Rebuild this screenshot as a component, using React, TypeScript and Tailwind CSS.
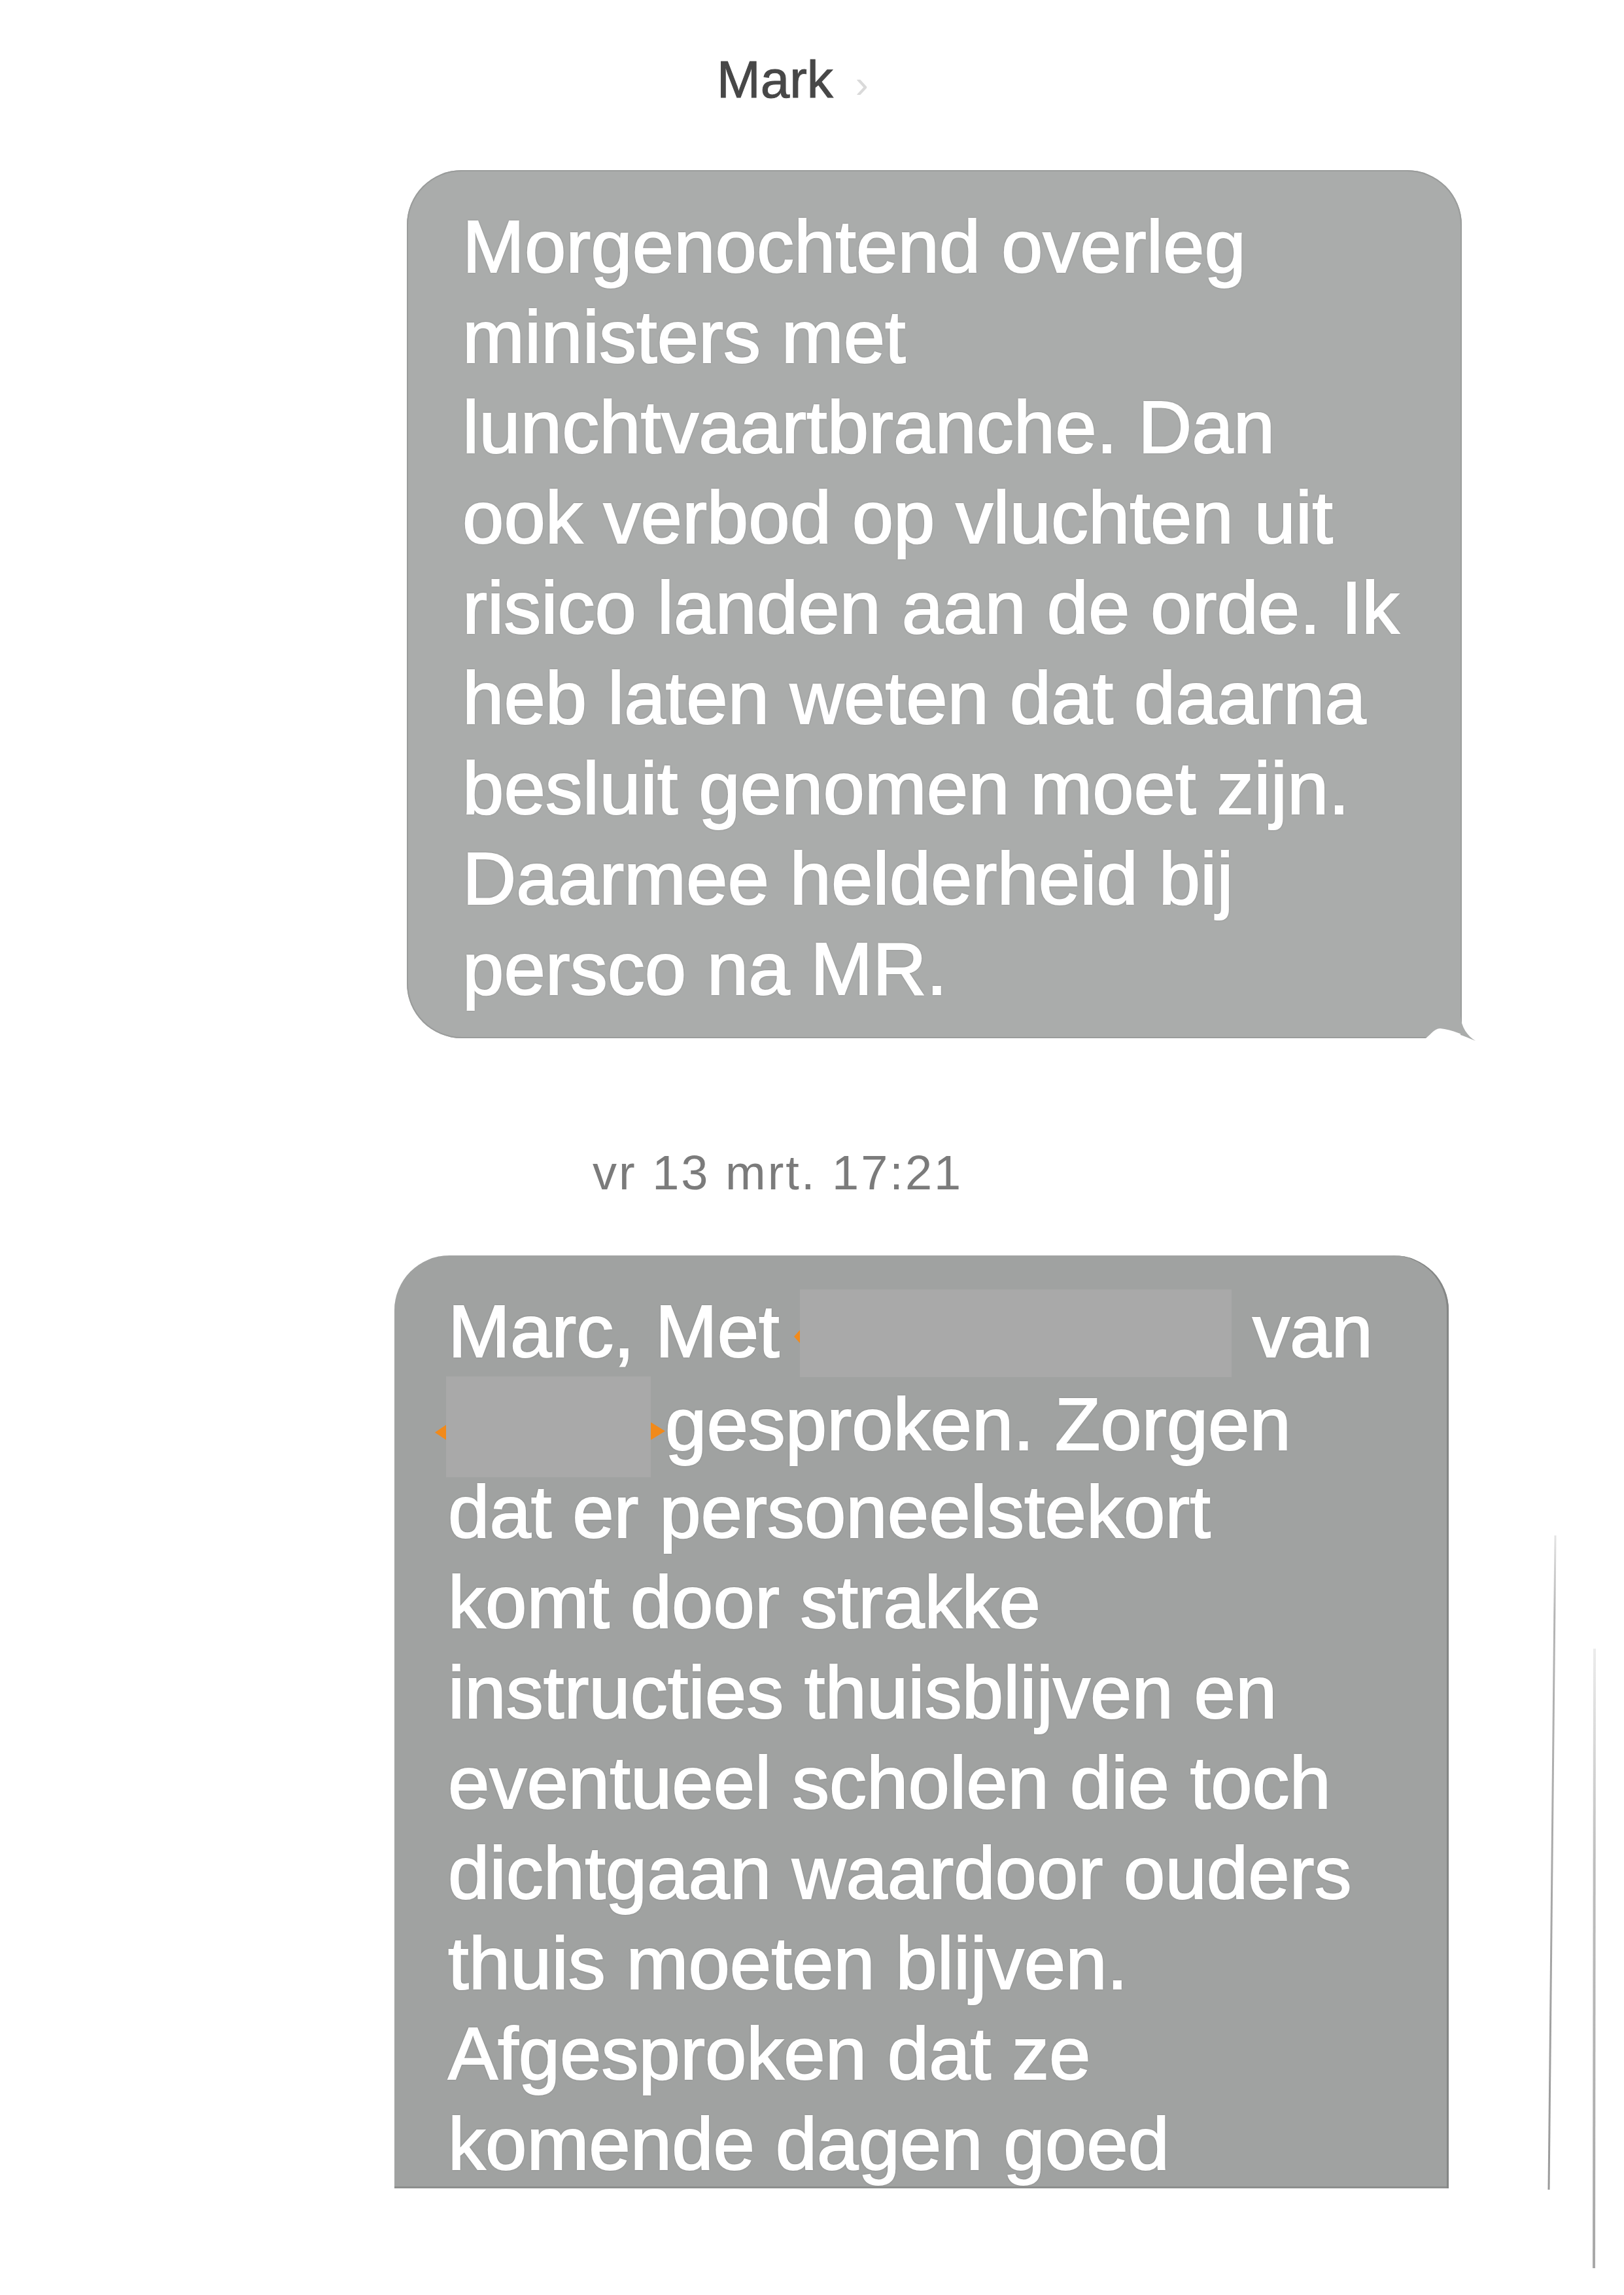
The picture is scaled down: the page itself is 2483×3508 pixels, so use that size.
import React from "react";

const firstMessage = [
  "Morgenochtend overleg",
  "ministers met",
  "lunchtvaartbranche. Dan",
  "ook verbod op vluchten uit",
  "risico landen aan de orde. Ik",
  "heb laten weten dat daarna",
  "besluit genomen moet zijn.",
  "Daarmee helderheid bij",
  "persco na MR.",
];

const secondMessageRest = [
  "dat er personeelstekort",
  "komt door strakke",
  "instructies thuisblijven en",
  "eventueel scholen die toch",
  "dichtgaan waardoor ouders",
  "thuis moeten blijven.",
  "Afgesproken dat ze",
  "komende dagen goed",
];

// scanned text: white glyphs, a bit heavy, with a dark halo round them
const textLine =
  "h-[138px] leading-[138px] whitespace-nowrap [-webkit-text-stroke:2px_white] [text-shadow:0_0_3px_rgba(60,60,60,0.7)]";

const Marker = ({ side, className }: { side: "left" | "right"; className: string }) => (
  <svg className={`absolute ${className}`} viewBox="0 0 20 24" preserveAspectRatio="none">
    {side === "left" ? (
      <polygon points="20,0 0,12 20,24" fill="#f28a1a" />
    ) : (
      <polygon points="0,0 20,12 0,24" fill="#f28a1a" />
    )}
  </svg>
);

const BubbleTail = () => (
  <svg className="absolute right-[-25px] bottom-[-5px] w-[110px] h-[70px]" viewBox="0 0 110 70">
    <path d="M28,66 C36,62 42,50 52,50 C70,52 90,60 106,69 L106,70 L0,70 L0,66 Z" fill="#ffffff" />
    <path d="M83,30 C84,48 94,62 106,69 C96,65 90,62 83,60 Z" fill="#aaacab" />
  </svg>
);

export default function App() {
  return (
    <div className="relative w-[2483px] h-[3508px] overflow-hidden bg-white font-['Liberation_Sans',Arial,sans-serif]">
      <div className="flex items-baseline pl-[1096px] pt-[74px] leading-[96px]">
        <span className="text-[80px] text-[#474747] [-webkit-text-stroke:1px_#474747]">Mark</span>
        <span className="ml-[34px] text-[60px] text-[#dadada]">›</span>
      </div>

      <div className="relative ml-[622px] mt-[83px] w-[1613px] rounded-[84px] rounded-br-none bg-[#aaacab] pl-[85px] pt-[48px] pb-[37px] text-[114px] text-white shadow-[inset_0_0_0_2px_#9a9c9b]">
        {firstMessage.map((line) => (
          <div key={line} className={textLine}>
            {line}
          </div>
        ))}
        <BubbleTail />
      </div>

      <div className="ml-[906px] mt-[161px] text-[74px] leading-[90px] tracking-[3px] text-[#7b7b7b]">
        vr 13 mrt. 17:21
      </div>

      <div className="ml-[603px] mt-[81px] h-[1426px] w-[1612px] overflow-hidden rounded-t-[84px] bg-[#a0a2a1] pl-[82px] pt-[47px] text-[114px] text-white shadow-[inset_-3px_0_0_#858786,inset_0_-3px_0_#8c8e8d]">
        <div className={textLine}>
          Marc, Met{" "}
          <span className="relative inline-block h-[134px] w-[660px] bg-[#a9a9a9] align-[-31px]">
            <Marker side="left" className="left-[-9px] top-[62px] h-[20px] w-[9px]" />
          </span>{" "}
          van
        </div>
        <div className={textLine}>
          <span className="relative ml-[-3px] mr-[22px] inline-block h-[154px] w-[313px] bg-[#a9a9a9] align-[-42px]">
            <Marker side="left" className="left-[-17px] top-[74px] h-[23px] w-[17px]" />
            <Marker side="right" className="right-[-22px] top-[70px] h-[27px] w-[22px]" />
          </span>
          gesproken. Zorgen
        </div>
        {secondMessageRest.map((line) => (
          <div key={line} className={textLine}>
            {line}
          </div>
        ))}
      </div>

      <svg className="absolute left-[2340px] top-[2300px] h-[1200px] w-[120px]" viewBox="0 0 120 1200">
        <defs>
          <linearGradient id="lineA" x1="0" y1="0" x2="0" y2="1">
            <stop offset="0" stopColor="#e4e4e4" />
            <stop offset="0.12" stopColor="#b5b5b5" />
            <stop offset="1" stopColor="#9a9a9a" />
          </linearGradient>
          <linearGradient id="lineB" x1="0" y1="0" x2="0" y2="1">
            <stop offset="0" stopColor="#ececec" />
            <stop offset="0.35" stopColor="#bdbdbd" />
            <stop offset="1" stopColor="#a8a8a8" />
          </linearGradient>
        </defs>
        <line x1="38" y1="47" x2="28" y2="1047" stroke="url(#lineA)" strokeWidth="3" />
        <line x1="98" y1="220" x2="97" y2="1167" stroke="url(#lineB)" strokeWidth="4" />
      </svg>
    </div>
  );
}
